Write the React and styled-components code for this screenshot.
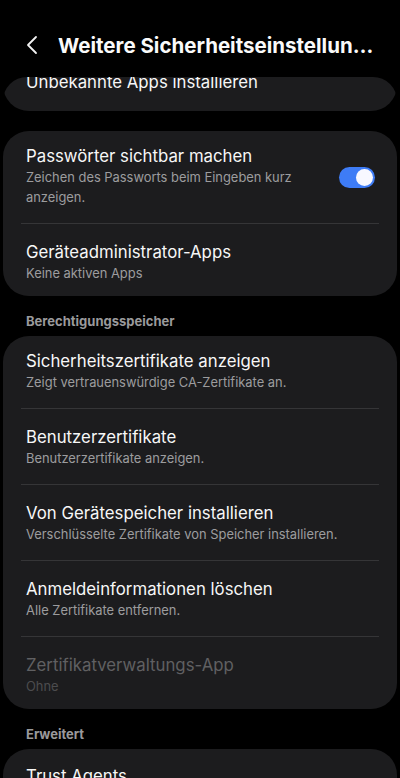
import React from 'react';
import styled, { createGlobalStyle } from 'styled-components';

const GlobalStyle = createGlobalStyle`
    html, body {
        margin: 0;
        padding: 0;
        height: 100%;
        background: #000000;
        overflow: hidden;
    }
    #root {
        height: 100%;
    }
    * {
        box-sizing: border-box;
    }
`;

const Screen = styled.div`
    height: 100%;
    display: flex;
    flex-direction: column;
    background: #000000;
    font-family: Inter, Roboto, "Noto Sans", sans-serif;
    color: #f7f7f7;
`;

const Header = styled.div`
    height: 77px;
    flex-shrink: 0;
    padding: 13px 26px 0 22px;
    display: flex;
    align-items: center;
    gap: 16px;
`;

const BackButton = styled.div`
    width: 20px;
    height: 24px;
    display: flex;
    align-items: center;
    justify-content: center;
    flex-shrink: 0;
`;

const Title = styled.h1`
    margin: 0;
    font-size: 20.5px;
    font-weight: 700;
    white-space: nowrap;
    overflow: hidden;
    text-overflow: ellipsis;
    color: #fafafa;
`;

const Viewport = styled.div`
    flex: 1;
    margin: 0 3px;
    overflow: hidden;
    border-radius: 24px 24px 0 0;
`;

const List = styled.div`
    margin-top: ${props => props.shift}px;
    display: flex;
    flex-direction: column;
`;

const Card = styled.div`
    background: #1c1c1e;
    border-radius: 26px;
    margin-bottom: ${props => props.gap || 0}px;
`;

const Row = styled.div`
    display: flex;
    align-items: center;
    padding: ${props => props.compact ? '16px 22px 17px 23px' : '14px 22px 12px 23px'};
    gap: 16px;
`;

const RowText = styled.div`
    flex: 1;
    min-width: 0;
`;

const RowTitle = styled.div`
    font-size: 16.8px;
    line-height: 23px;
    color: ${props => props.disabled ? '#606062' : '#f7f7f7'};
`;

const RowSub = styled.div`
    font-size: 12.9px;
    line-height: 20px;
    color: ${props => props.disabled ? '#4c4c4e' : '#9c9c9e'};
`;

const Divider = styled.div`
    height: 1px;
    margin: 3px 18px;
    background: #353537;
`;

const SectionLabel = styled.div`
    padding: 16px 23px 6px;
    font-size: 13px;
    line-height: 18px;
    font-weight: 700;
    color: #9a9a9c;
`;

const Switch = styled.div`
    width: 36px;
    height: 21px;
    border-radius: 11px;
    background: ${props => props.on ? '#3e7cf6' : '#5a5a5c'};
    position: relative;
    flex-shrink: 0;
    margin-top: 2px;
`;

const Knob = styled.div`
    position: absolute;
    top: 2px;
    left: ${props => props.on ? 17 : 2}px;
    width: 17px;
    height: 17px;
    border-radius: 50%;
    background: #f8f8ff;
`;

function Item({ title, sub, disabled, toggle, compact }) {
    return (
        <Row compact={compact}>
            <RowText>
                <RowTitle disabled={disabled}>{title}</RowTitle>
                {sub && <RowSub disabled={disabled}>{sub}</RowSub>}
            </RowText>
            {toggle !== undefined && (
                <Switch on={toggle}>
                    <Knob on={toggle} />
                </Switch>
            )}
        </Row>
    );
}

const certItems = [
    { title: 'Sicherheitszertifikate anzeigen', sub: 'Zeigt vertrauenswürdige CA-Zertifikate an.' },
    { title: 'Benutzerzertifikate', sub: 'Benutzerzertifikate anzeigen.' },
    { title: 'Von Gerätespeicher installieren', sub: 'Verschlüsselte Zertifikate von Speicher installieren.' },
    { title: 'Anmeldeinformationen löschen', sub: 'Alle Zertifikate entfernen.' },
    { title: 'Zertifikatverwaltungs-App', sub: 'Ohne', disabled: true },
];

export default function App() {
    return (
        <Screen>
            <GlobalStyle />
            <Header>
                <BackButton>
                    <svg width="12" height="20" viewBox="0 0 12 20" fill="none">
                        <path d="M10 2 L2 10 L10 18" stroke="#f2f2f2" strokeWidth="1.8" strokeLinecap="round" strokeLinejoin="round" />
                    </svg>
                </BackButton>
                <Title>Weitere Sicherheitseinstellungen</Title>
            </Header>
            <Viewport>
                <List shift={-22}>
                    <Card gap={20}>
                        <Item compact title="Unbekannte Apps installieren" />
                    </Card>
                    <Card>
                        <Item
                            title="Passwörter sichtbar machen"
                            sub="Zeichen des Passworts beim Eingeben kurz anzeigen."
                            toggle={true}
                        />
                        <Divider />
                        <Item title="Geräteadministrator-Apps" sub="Keine aktiven Apps" />
                    </Card>
                    <SectionLabel>Berechtigungsspeicher</SectionLabel>
                    <Card>
                        {certItems.map((it, i) => (
                            <React.Fragment key={it.title}>
                                {i > 0 && <Divider />}
                                <Item {...it} />
                            </React.Fragment>
                        ))}
                    </Card>
                    <SectionLabel>Erweitert</SectionLabel>
                    <Card>
                        <Item compact title="Trust Agents" />
                    </Card>
                </List>
            </Viewport>
        </Screen>
    );
}
